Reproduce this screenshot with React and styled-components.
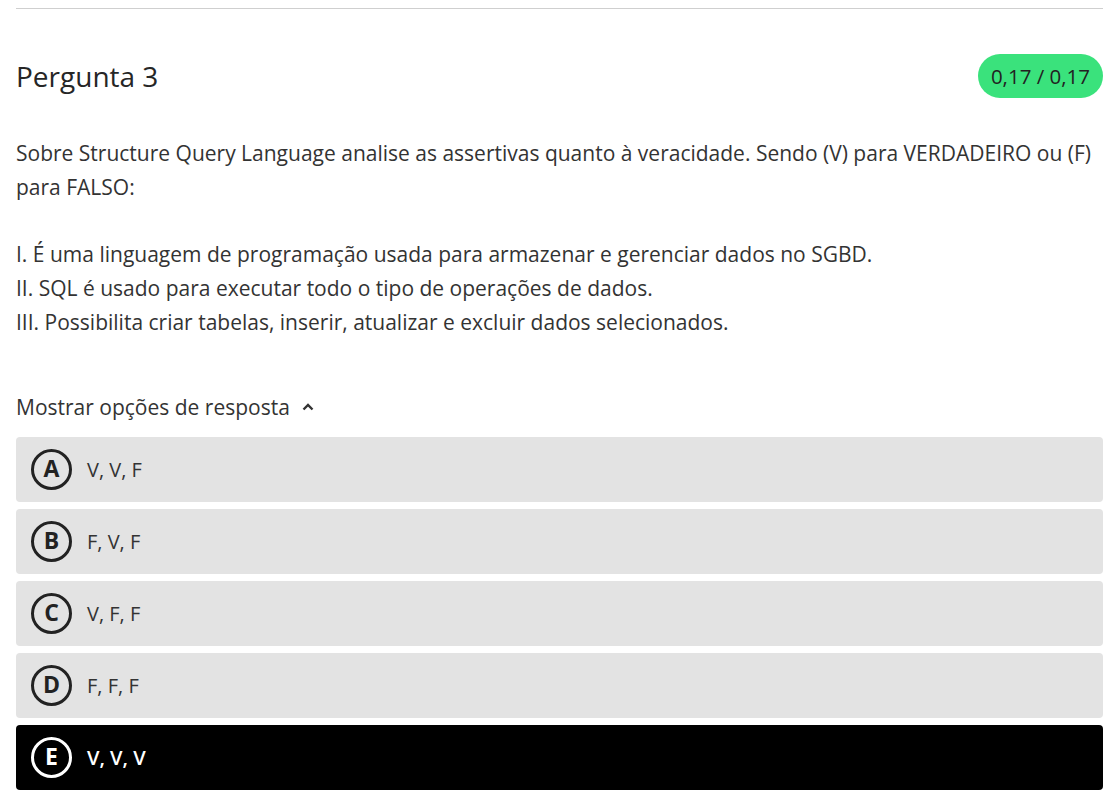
import React from "react";
import styled, { createGlobalStyle } from "styled-components";

const GlobalStyle = createGlobalStyle`
  body {
    margin: 0;
    background: #fff;
    font-family: "Open Sans", "Noto Sans", sans-serif;
    color: #333;
  }
`;

const options = [
  { letter: "A", text: "V, V, F" },
  { letter: "B", text: "F, V, F" },
  { letter: "C", text: "V, F, F" },
  { letter: "D", text: "F, F, F" },
  { letter: "E", text: "V, V, V", selected: true },
];

const App = () => {
  return (
    <Wrapper>
      <GlobalStyle />
      <Divider />
      <Header>
        <h2>Pergunta 3</h2>
        <Score>0,17 / 0,17</Score>
      </Header>
      <Statement>
        <p>
          Sobre Structure Query Language analise as assertivas quanto à
          veracidade. Sendo (V) para VERDADEIRO ou (F) para FALSO:
        </p>
        <p>
          I. É uma linguagem de programação usada para armazenar e gerenciar
          dados no SGBD.
          <br />
          II. SQL é usado para executar todo o tipo de operações de dados.
          <br />
          III. Possibilita criar tabelas, inserir, atualizar e excluir dados
          selecionados.
        </p>
      </Statement>
      <Toggle>
        Mostrar opções de resposta
        <svg width="12" height="8" viewBox="0 0 12 8">
          <path
            d="M1.5 6.5 L6 2 L10.5 6.5"
            fill="none"
            stroke="#333"
            strokeWidth="2.4"
          />
        </svg>
      </Toggle>
      <Options>
        {options.map((option) => (
          <Option key={option.letter} selected={option.selected}>
            <Letter selected={option.selected}>{option.letter}</Letter>
            <span>{option.text}</span>
          </Option>
        ))}
      </Options>
    </Wrapper>
  );
};

export default App;

const Wrapper = styled.div`
  padding: 8px 16px 0;
`;

const Divider = styled.div`
  height: 1px;
  background: #cfcfcf;
`;

const Header = styled.div`
  display: flex;
  align-items: center;
  justify-content: space-between;
  margin-top: 45px;

  h2 {
    margin: 0;
    font-size: 28px;
    font-weight: 400;
    color: #262626;
  }
`;

const Score = styled.div`
  background: #3ae27c;
  color: #222;
  font-size: 20.5px;
  height: 44px;
  padding: 0 13px;
  display: flex;
  align-items: center;
  border-radius: 22px;
`;

const Statement = styled.div`
  margin-top: 38px;

  p {
    margin: 0 0 33px;
    font-size: 21px;
    line-height: 34px;
    color: #333;
  }
`;

const Toggle = styled.div`
  display: flex;
  align-items: center;
  gap: 12px;
  font-size: 21px;
  color: #333;
  margin-top: 53px;
  height: 30px;
`;

const Options = styled.div`
  display: flex;
  flex-direction: column;
  gap: 7px;
  margin-top: 15px;
`;

const Option = styled.div`
  display: flex;
  align-items: center;
  gap: 15px;
  height: 65px;
  padding: 0 15px;
  border-radius: 4px;
  background: ${(props) => (props.selected ? "#000" : "#e3e3e3")};
  color: ${(props) => (props.selected ? "#fff" : "#333")};
  font-size: 20px;
  font-weight: ${(props) => (props.selected ? 600 : 400)};
`;

const Letter = styled.div`
  box-sizing: border-box;
  width: 41px;
  height: 41px;
  padding-bottom: 3px;
  border-radius: 50%;
  border: 3px solid ${(props) => (props.selected ? "#fff" : "#222")};
  display: flex;
  align-items: center;
  justify-content: center;
  font-size: 23px;
  line-height: 1;
  font-weight: 700;
  color: ${(props) => (props.selected ? "#fff" : "#222")};
`;
